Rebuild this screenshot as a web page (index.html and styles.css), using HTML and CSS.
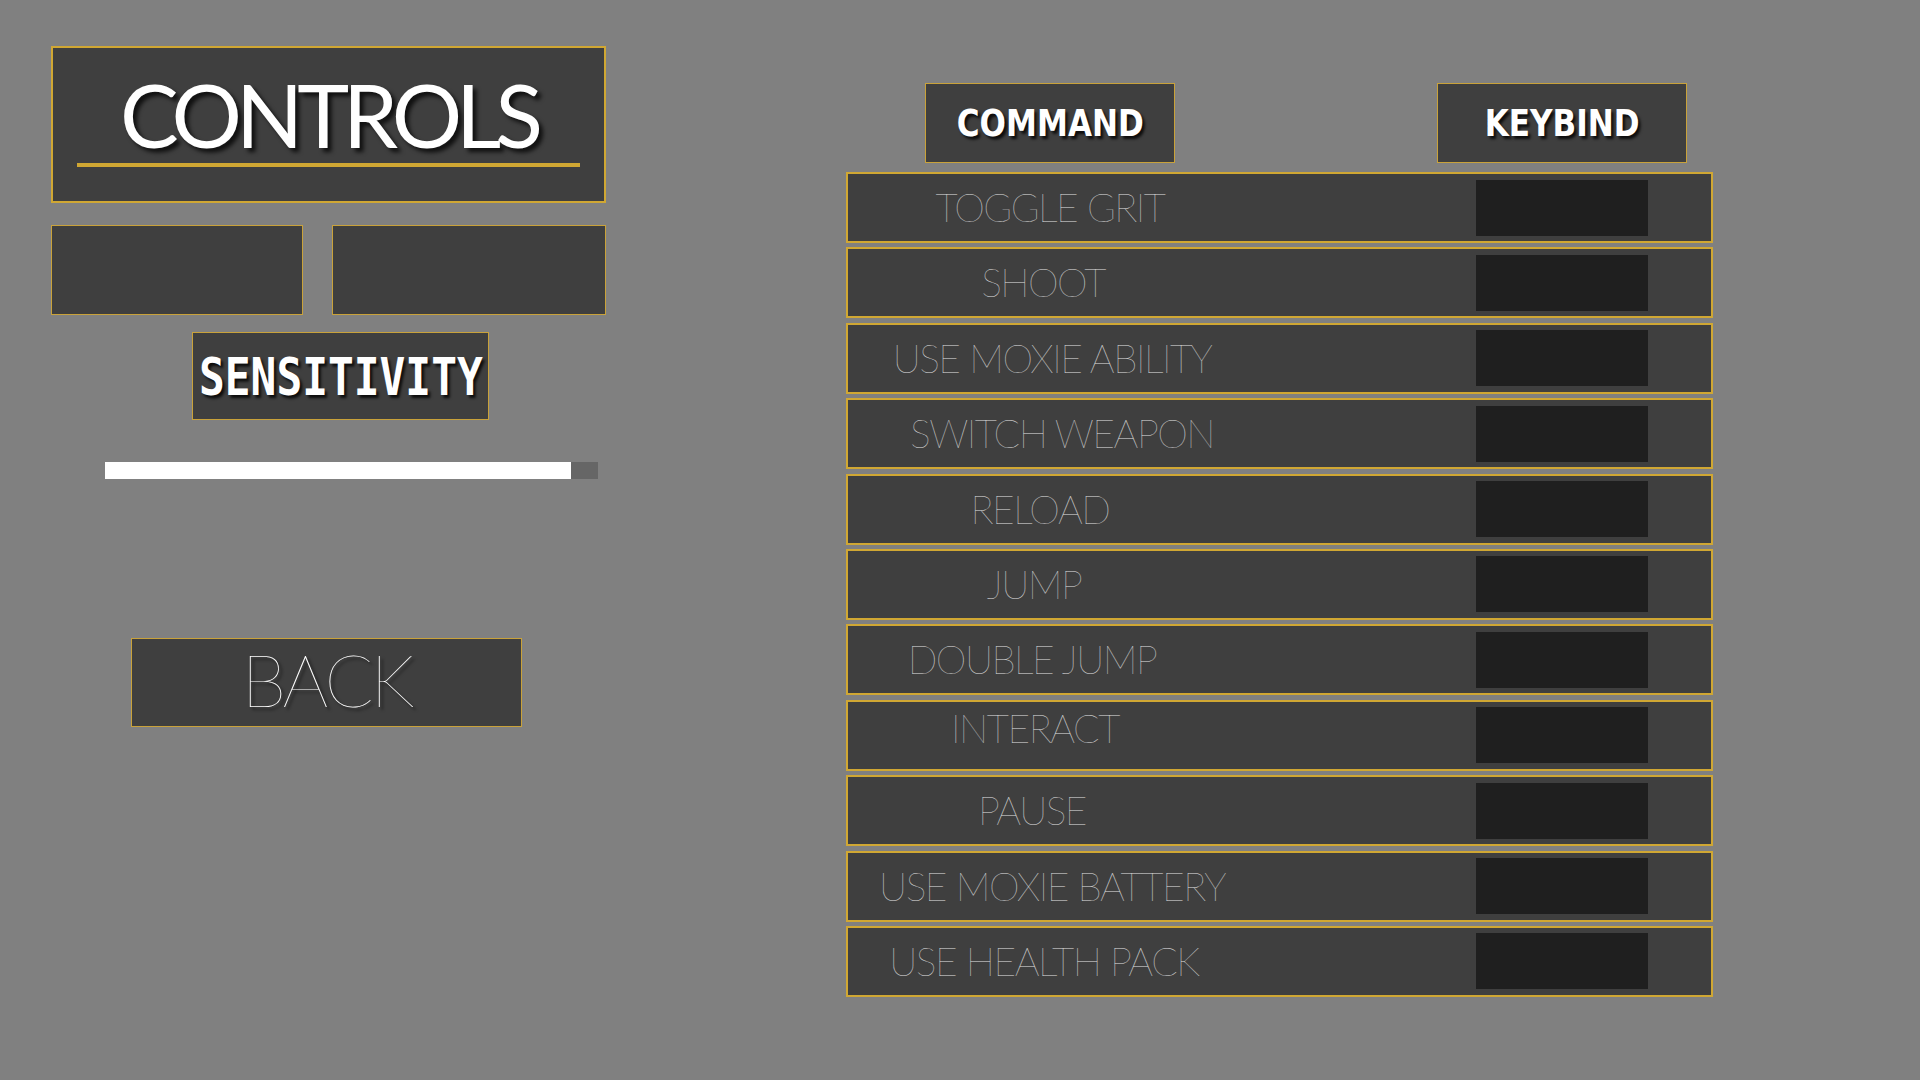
FILE: index.html
```html
<!DOCTYPE html>
<html lang="en">
<head>
<meta charset="utf-8">
<title>Controls</title>
<link rel="stylesheet" href="styles.css">
</head>
<body>
<div class="screen">
  <section class="left">
    <div class="title-panel">
      <h1 class="title">CONTROLS</h1>
      <div class="title-rule"></div>
    </div>
    <div class="tabs">
      <div class="tab tab-a"></div>
      <div class="tab tab-b"></div>
    </div>
    <div class="sens-box"><span class="sens-text">SENSITIVITY</span></div>
    <div class="slider">
      <div class="slider-fill"></div>
      <div class="slider-handle"></div>
    </div>
    <div class="back-btn"><span class="back-text">BACK</span></div>
  </section>

  <section class="right">
    <div class="headers">
      <div class="head head-cmd"><span class="head-text">COMMAND</span></div>
      <div class="head head-key"><span class="head-text">KEYBIND</span></div>
    </div>
    <div class="rows">
      <div class="row"><span class="label l-grit">TOGGLE GRIT</span><div class="key"></div></div>
      <div class="row"><span class="label l-shoot">SHOOT</span><div class="key"></div></div>
      <div class="row"><span class="label l-ability">USE MOXIE ABILITY</span><div class="key"></div></div>
      <div class="row"><span class="label l-switch">SWITCH WEAPON</span><div class="key"></div></div>
      <div class="row"><span class="label l-reload">RELOAD</span><div class="key"></div></div>
      <div class="row"><span class="label l-jump">JUMP</span><div class="key"></div></div>
      <div class="row"><span class="label l-double">DOUBLE JUMP</span><div class="key"></div></div>
      <div class="row"><span class="label l-interact">INTERACT</span><div class="key"></div></div>
      <div class="row"><span class="label l-pause">PAUSE</span><div class="key"></div></div>
      <div class="row"><span class="label l-battery">USE MOXIE BATTERY</span><div class="key"></div></div>
      <div class="row"><span class="label l-health">USE HEALTH PACK</span><div class="key"></div></div>
    </div>
  </section>
</div>
</body>
</html>
```
FILE: styles.css
```css
* { box-sizing: border-box; }

html, body {
  margin: 0;
  padding: 0;
  width: 1920px;
  height: 1080px;
  background: #808080;
  overflow: hidden;
}

.screen {
  display: flex;
  padding-left: 51px;
  font-family: "Lato", "Liberation Sans", sans-serif;
}

/* ---------- left column ---------- */
.left {
  width: 555px;
  display: flex;
  flex-direction: column;
  padding-top: 46px;
}

.title-panel {
  height: 157px;
  background: #3f3f3f;
  border: 2px solid #d0a733;
  display: flex;
  flex-direction: column;
  align-items: center;
  padding-top: 22px;
}

.title {
  margin: 0;
  font-family: "Lato", sans-serif;
  font-weight: 400;
  font-size: 88px;
  line-height: 88px;
  height: 88px;
  letter-spacing: -6px;
  color: #ffffff;
  text-shadow: 4px 4px 4px rgba(0, 0, 0, 0.75);
}

.title-rule {
  margin-top: 5px;
  width: 503px;
  height: 4px;
  background: #d0a733;
}

.tabs {
  display: flex;
  gap: 29px;
  margin-top: 22px;
}

.tab {
  height: 90px;
  background: #3f3f3f;
  border: 1px solid #c9a23a;
}
.tab-a { width: 252px; }
.tab-b { width: 274px; }

.sens-box {
  margin-top: 17px;
  margin-left: 141px;
  width: 297px;
  height: 88px;
  background: #3f3f3f;
  border: 1px solid #c9a23a;
  display: flex;
  justify-content: center;
  align-items: center;
  padding-top: 2px;
}

.sens-text {
  display: inline-block;
  font-family: "DejaVu Sans Mono", "Liberation Mono", monospace;
  font-weight: 700;
  font-size: 51px;
  line-height: 51px;
  color: #ffffff;
  transform: scaleX(0.84);
  text-shadow: 3px 3px 3px rgba(0, 0, 0, 0.8);
}

.slider {
  margin-top: 42px;
  margin-left: 54px;
  width: 493px;
  height: 17px;
  display: flex;
}
.slider-fill {
  width: 466px;
  background: #ffffff;
}
.slider-handle {
  flex: 1;
  background: #666666;
}

.back-btn {
  margin-top: 159px;
  margin-left: 80px;
  width: 391px;
  height: 89px;
  background: #3f3f3f;
  border: 1px solid #c9a23a;
  display: flex;
  justify-content: center;
  align-items: center;
  padding-bottom: 8px;
}

.back-text {
  font-family: "Lato", sans-serif;
  font-weight: 100;
  font-size: 72px;
  line-height: 72px;
  letter-spacing: -3px;
  color: #ffffff;
  text-shadow: 3px 3px 3px rgba(0, 0, 0, 0.7);
}

/* ---------- right column ---------- */
.right {
  margin-left: 240px;
  width: 867px;
  display: flex;
  flex-direction: column;
  padding-top: 83px;
}

.headers {
  display: flex;
  height: 80px;
  padding-left: 79px;
}

.head {
  width: 250px;
  height: 80px;
  background: #3f3f3f;
  border: 1px solid #c9a23a;
  display: flex;
  justify-content: center;
  align-items: center;
}
.head-key { margin-left: 262px; }

.head-text {
  display: inline-block;
  font-family: "DejaVu Sans", "Liberation Sans", sans-serif;
  font-weight: 700;
  font-size: 37px;
  line-height: 37px;
  color: #ffffff;
  transform: scaleX(0.84);
  text-shadow: 3px 3px 3px rgba(0, 0, 0, 0.8);
}

.rows {
  margin-top: 9px;
  display: flex;
  flex-direction: column;
  gap: 4.4px;
}

.row {
  height: 71px;
  background: #3f3f3f;
  border: 2px solid #d0a733;
  display: flex;
  align-items: center;
}

.label {
  width: 394px;
  text-align: center;
  font-family: "Lato", sans-serif;
  font-weight: 100;
  font-size: 39px;
  line-height: 39px;
  letter-spacing: -1.5px;
  color: #e2e2e2;
  white-space: nowrap;
}

.l-grit { margin-left: 5px; }
.l-shoot { margin-left: -2px; }
.l-ability { margin-left: 7px; }
.l-switch { margin-left: 17px; }
.l-reload { margin-left: -5px; }
.l-jump { margin-left: -11px; }
.l-double { margin-left: -13px; }
.l-interact { margin-left: -10px; margin-bottom: 14px; }
.l-pause { margin-left: -13px; }
.l-battery { margin-left: 7px; }
.l-health { margin-left: -1px; }

.key {
  margin-left: auto;
  margin-right: 63px;
  width: 172px;
  height: 56px;
  background: #1f1f1f;
}
```
